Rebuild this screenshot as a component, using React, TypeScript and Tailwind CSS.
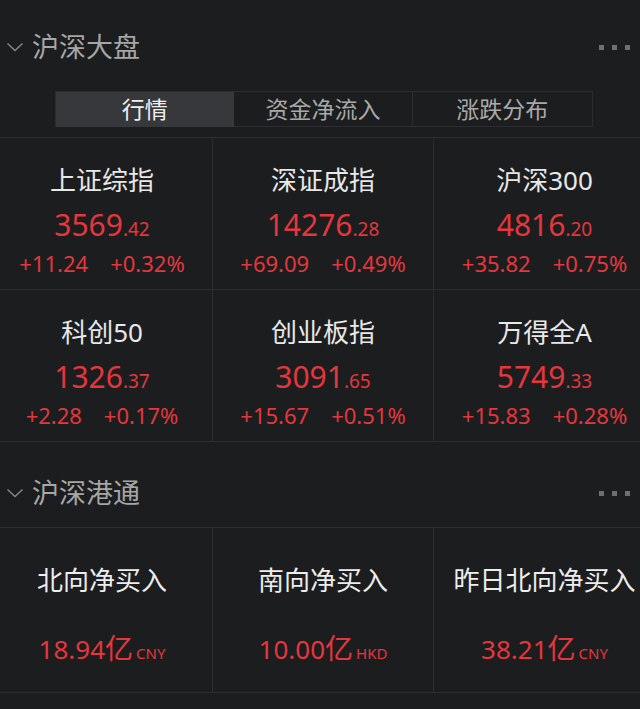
import React from "react";

const RED = "text-[#e3373d]";

type Idx = { name: string; int: string; dec: string; chg: string; pct: string };

const row1: Idx[] = [
  { name: "上证综指", int: "3569", dec: ".42", chg: "+11.24", pct: "+0.32%" },
  { name: "深证成指", int: "14276", dec: ".28", chg: "+69.09", pct: "+0.49%" },
  { name: "沪深300", int: "4816", dec: ".20", chg: "+35.82", pct: "+0.75%" },
];
const row2: Idx[] = [
  { name: "科创50", int: "1326", dec: ".37", chg: "+2.28", pct: "+0.17%" },
  { name: "创业板指", int: "3091", dec: ".65", chg: "+15.67", pct: "+0.51%" },
  { name: "万得全A", int: "5749", dec: ".33", chg: "+15.83", pct: "+0.28%" },
];

const flows = [
  { name: "北向净买入", val: "18.94", unit: "CNY" },
  { name: "南向净买入", val: "10.00", unit: "HKD" },
  { name: "昨日北向净买入", val: "38.21", unit: "CNY" },
];

function Chevron() {
  return (
    <svg width="18" height="12" viewBox="0 0 18 12" className="shrink-0">
      <path d="M1.5 2.5 L9 9.5 L16.5 2.5" fill="none" stroke="#8a8a8a" strokeWidth="1.3" />
    </svg>
  );
}

function Dots() {
  return (
    <div className="flex gap-[8px]">
      <span className="w-[5px] h-[5px] bg-[#6f6f6f]" />
      <span className="w-[5px] h-[5px] bg-[#6f6f6f]" />
      <span className="w-[5px] h-[5px] bg-[#6f6f6f]" />
    </div>
  );
}

function SectionHeader({ title }: { title: string }) {
  return (
    <div className="flex items-center h-[50px] pl-[14px] pr-[25px]">
      <Chevron />
      <span className="ml-[8px] text-[27px] leading-[32px] text-[#a6a6a6]">{title}</span>
      <div className="flex-1" />
      <Dots />
    </div>
  );
}

function IdxCell({ d, last }: { d: Idx; last: boolean }) {
  return (
    <div
      className={`h-[152px] border-b border-[#2c2d30] ${last ? "" : "border-r"} flex flex-col items-center pt-[27px]`}
    >
      <div className="h-[30px] leading-[30px] text-[26px] text-[#e8e8e8] whitespace-nowrap">{d.name}</div>
      <div className={`mt-[12px] h-[36px] leading-[36px] ${RED} whitespace-nowrap`}>
        <span className="text-[30px]">{d.int}</span>
        <span className="text-[19px]">{d.dec}</span>
      </div>
      <div className={`mt-[6px] h-[28px] leading-[28px] text-[22px] ${RED} flex gap-[22px] whitespace-nowrap`}>
        <span>{d.chg}</span>
        <span>{d.pct}</span>
      </div>
    </div>
  );
}

export default function App() {
  return (
    <div
      className="w-[640px] h-[709px] overflow-hidden bg-[#1c1d1f]"
      style={{ fontFamily: '"Noto Sans", "Noto Sans CJK SC", sans-serif' }}
    >
      <div className="w-[663px] -ml-[8px] pt-[22px]">
        <SectionHeader title="沪深大盘" />
        <div className="mt-[19px] mx-auto w-[538px] h-[36px] grid grid-cols-3 border border-[#2c2d30] bg-[#1c1d1f]">
          <div className="bg-[#37383c] flex items-center justify-center text-[23px] text-[#f0f0f0]">行情</div>
          <div className="border-r border-[#2c2d30] flex items-center justify-center text-[23px] text-[#a9a9a9]">资金净流入</div>
          <div className="flex items-center justify-center text-[23px] text-[#a9a9a9]">涨跌分布</div>
        </div>
        <div className="mt-[10px] border-t border-[#2c2d30] grid grid-cols-3">
          {row1.map((d, i) => (
            <IdxCell key={d.name} d={d} last={i === 2} />
          ))}
          {row2.map((d, i) => (
            <IdxCell key={d.name} d={d} last={i === 2} />
          ))}
        </div>
        <div className="pt-[26px] h-[85px]">
          <SectionHeader title="沪深港通" />
        </div>
        <div className="border-t border-[#2c2d30] grid grid-cols-3">
          {flows.map((f, i) => (
            <div
              key={f.name}
              className={`h-[165px] border-b border-[#2c2d30] ${i === 2 ? "" : "border-r"} flex flex-col items-center pt-[36px]`}
            >
              <div className="h-[32px] leading-[32px] text-[26px] text-[#ededed] whitespace-nowrap">{f.name}</div>
              <div className={`mt-[34px] h-[36px] leading-[36px] ${RED} whitespace-nowrap flex items-baseline`}>
                <span className="text-[26px]">{f.val}</span>
                <span className="text-[28px]">亿</span>
                <span className="ml-[3px] text-[15px]">{f.unit}</span>
              </div>
            </div>
          ))}
        </div>
      </div>
    </div>
  );
}
